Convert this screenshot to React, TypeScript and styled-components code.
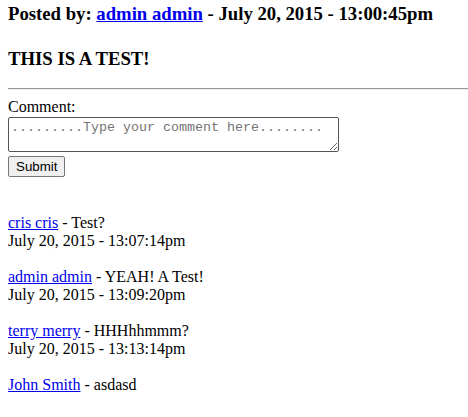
import React from 'react'
import styled, { createGlobalStyle } from 'styled-components'

interface Comment {
  author: string
  text: string
  date?: string
}

const comments: Comment[] = [
  { author: 'cris cris', text: 'Test?', date: 'July 20, 2015 - 13:07:14pm' },
  { author: 'admin admin', text: 'YEAH! A Test!', date: 'July 20, 2015 - 13:09:20pm' },
  { author: 'terry merry', text: 'HHHhhmmm?', date: 'July 20, 2015 - 13:13:14pm' },
  { author: 'John Smith', text: 'asdasd' }
]

const GlobalStyle = createGlobalStyle`
  body {
    margin: 0 0 0 8px;
    font-family: "Liberation Serif", "Times New Roman", serif;
    font-size: 16px;
    color: #000;
    background: #fff;
  }
`

const Heading = styled.h3`
  font-size: 18.72px;
  font-weight: bold;
  margin: 3px 0 0;
  line-height: 21px;
`

const Title = styled(Heading)`
  margin-top: 24px;
`

const Link = styled.a`
  color: #0000ee;
  text-decoration: underline;
`

const Rule = styled.hr`
  border: none;
  border-top: 1px solid #9a9a9a;
  border-bottom: 1px solid #eeeeee;
  margin: 19px 0 8px;
`

const Form = styled.form`
  display: flex;
  flex-direction: column;
  align-items: flex-start;
`

const Label = styled.label`
  line-height: 18px;
  margin-bottom: 1px;
`

const TextArea = styled.textarea`
  width: 325px;
  height: 29px;
  margin: 0;
  padding: 2px;
  border: 1px solid #555555;
  border-radius: 2px;
  font-family: "Liberation Mono", "Courier New", monospace;
  font-size: 13.33px;

  &::placeholder {
    color: #757575;
  }
`

const Button = styled.button`
  margin-top: 4px;
  font-family: "Liberation Sans", Arial, sans-serif;
  font-size: 13.33px;
  padding: 1px 7px;
  height: 21px;
  border: 1px solid #767676;
  border-radius: 2px;
  background: #efefef;
  color: #000;
`

const CommentList = styled.div`
  margin-top: 37px;
  display: flex;
  flex-direction: column;
  gap: 18px;
`

const CommentBlock = styled.div`
  line-height: 18px;
`

export default function App() {
  return (
    <>
      <GlobalStyle />
      <Heading>
        Posted by: <Link href="#">admin admin</Link> - July 20, 2015 - 13:00:45pm
      </Heading>
      <Title>THIS IS A TEST!</Title>
      <Rule />
      <Form onSubmit={e => e.preventDefault()}>
        <Label>Comment:</Label>
        <TextArea placeholder=".........Type your comment here........" />
        <Button type="submit">Submit</Button>
      </Form>
      <CommentList>
        {comments.map((c, i) => (
          <CommentBlock key={i}>
            <Link href="#">{c.author}</Link> - {c.text}
            {c.date && (
              <>
                <br />
                {c.date}
              </>
            )}
          </CommentBlock>
        ))}
      </CommentList>
    </>
  )
}
